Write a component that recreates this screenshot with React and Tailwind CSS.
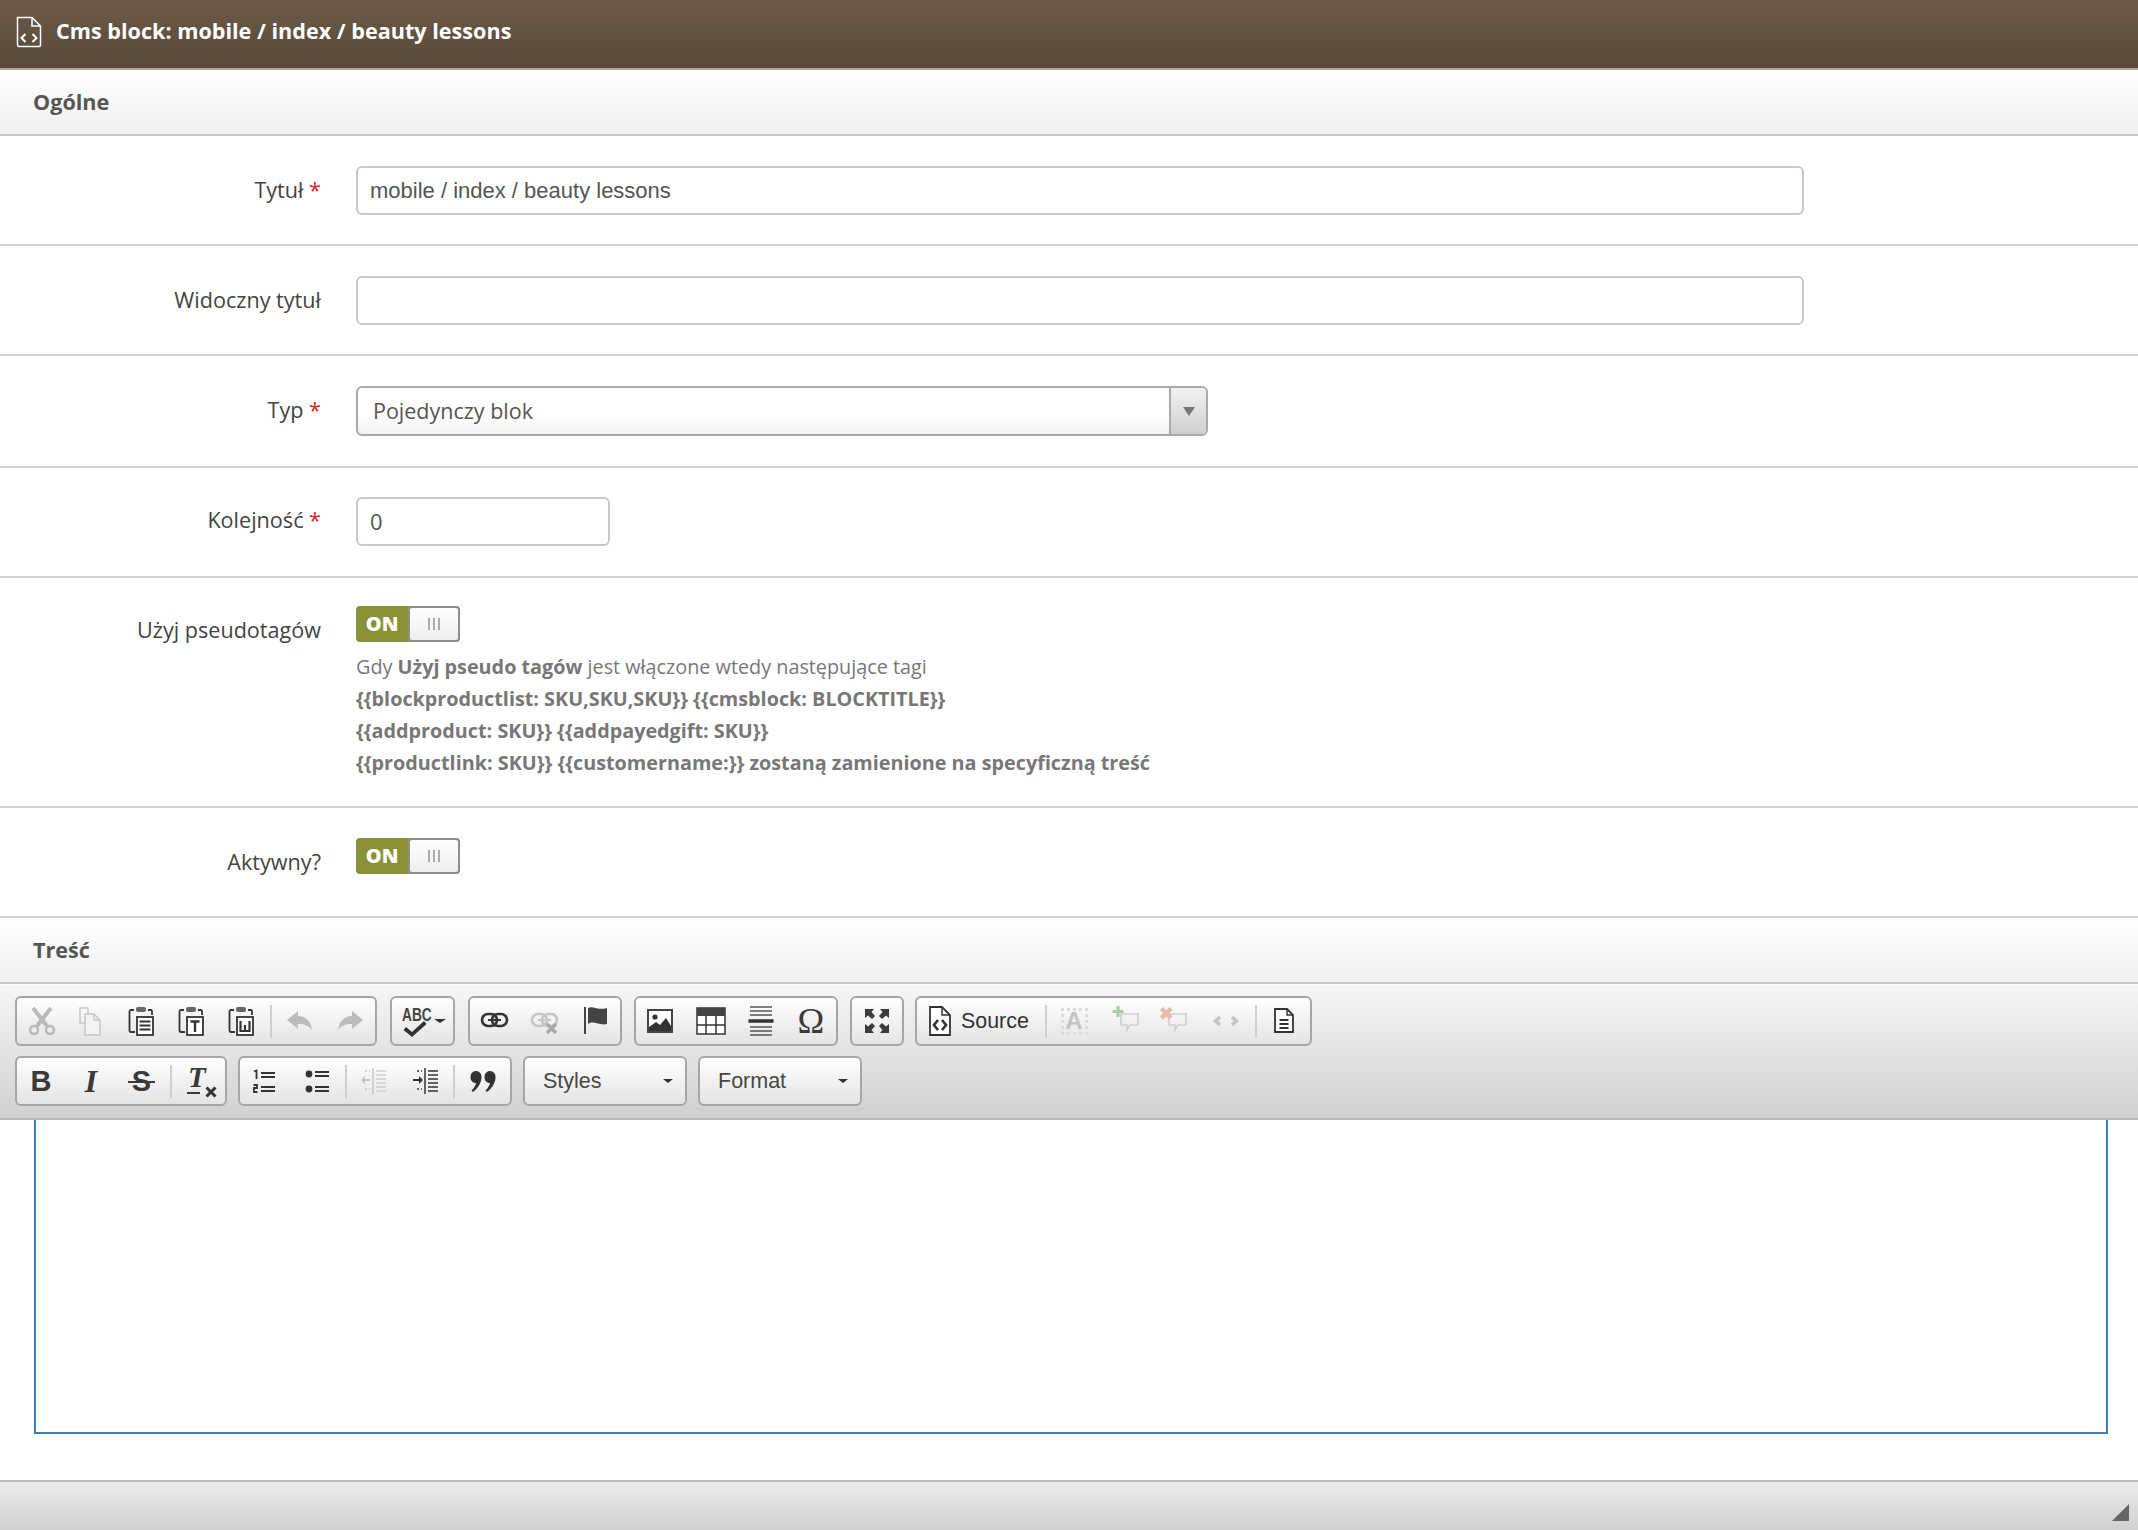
import React from 'react';

const sans = 'font-["Open_Sans",sans-serif]';
const arial = 'font-["Liberation_Sans",Arial,sans-serif]';

const Svg = ({ w = 32, h = 32, children, className = '' }) => (
  <svg width={w} height={h} viewBox={`0 0 ${w} ${h}`} className={className}>
    {children}
  </svg>
);

// toolbar icons, drawn to match the moono skin
const Cut = () => (
  <Svg>
    <g fill="none" stroke="#b9b9b9">
      <path d="M7 3 L21 21 M25 3 L11 21" strokeWidth="4" />
      <circle cx="8" cy="25" r="4" strokeWidth="2.5" />
      <circle cx="24" cy="25" r="4" strokeWidth="2.5" />
    </g>
  </Svg>
);
const Copy = () => (
  <Svg>
    <g fill="#f3f3f3" stroke="#c6c6c6" strokeWidth="1.5">
      <path d="M4 3 H12 V18 H4 Z" fill="none" />
      <path d="M9 9 H18 L24 15 V30 H9 Z" />
      <path d="M18 9 V15 H24" fill="none" />
    </g>
  </Svg>
);
const Clip = ({ children }) => (
  <Svg>
    <path d="M8 5 H5 Q3.5 5 3.5 7 V25 Q3.5 27 5 27 H9 M22 5 H25 Q26 5 26 7 V10" fill="none" stroke="#333" strokeWidth="1.8" />
    <rect x="10" y="2" width="10" height="5" rx="2" fill="#666" />
    <rect x="11" y="12" width="16" height="18" fill="#fff" stroke="#333" strokeWidth="1.8" />
    {children}
  </Svg>
);
const Paste = () => (
  <Clip>
    <path d="M13.5 16.5 H24.5 M13.5 20.5 H24.5 M13.5 24.5 H24.5" stroke="#333" strokeWidth="2" />
  </Clip>
);
const PasteText = () => (
  <Clip>
    <path d="M14.5 16.5 H23.5 M19 16.5 V27" stroke="#333" strokeWidth="2.4" fill="none" />
  </Clip>
);
const PasteWord = () => (
  <Clip>
    <path d="M14.5 16 V26 H23.5 V16 M19 20 V26" stroke="#333" strokeWidth="2.2" fill="none" />
  </Clip>
);
const Undo = ({ flip }) => (
  <Svg className={flip ? '-scale-x-100' : ''}>
    <path d="M3 15 L14 6 V11 C22 11 27 17 28 25 C24 20 20 19 14 19 V24 Z" fill="#bcbcbc" />
  </Svg>
);
const Spell = () => (
  <div className="flex items-center">
    <div className="relative w-[32px] h-[32px]">
      <span className={`${arial} absolute left-[2px] top-[-4px] text-[19px] font-bold text-[#444] scale-x-[0.72] origin-left`}>ABC</span>
      <svg width="32" height="32" viewBox="0 0 32 32" className="absolute inset-0">
        <path d="M6 22 L12 27 L24 16 L26.5 19 L12 32 L3.5 25 Z" fill="#333" />
      </svg>
    </div>
    <div className="w-0 h-0 ml-[2px] border-x-[6px] border-x-transparent border-t-[4px] border-t-[#333]"></div>
  </div>
);
const LinkIcon = ({ color = '#333' }) => (
  <g fill="none" stroke={color} strokeWidth="2.6">
    <rect x="3" y="9" width="15" height="12" rx="6" />
    <rect x="13" y="9" width="15" height="12" rx="6" />
    <path d="M9 15 H22" strokeWidth="2" />
  </g>
);
const Link = () => <Svg><LinkIcon /></Svg>;
const Unlink = () => (
  <Svg>
    <LinkIcon color="#c6c6c6" />
    <path d="M18 19 L27 28 M27 19 L18 28" stroke="#a9a9a9" strokeWidth="3.2" />
  </Svg>
);
const Flag = () => (
  <Svg>
    <path d="M6 2 V29" stroke="#444" strokeWidth="2" />
    <path d="M9 3 C14 0 18 6 28 3 V19 C20 21 15 15 9 19 Z" fill="#444" />
  </Svg>
);
const ImageIcon = () => (
  <Svg>
    <rect x="3" y="5" width="24" height="22" fill="#fff" stroke="#444" strokeWidth="2" />
    <circle cx="10" cy="12" r="2.6" fill="#333" />
    <path d="M4 26 V22 L11 17 L15 20 L21 13 L26 21 V26 Z" fill="#333" />
  </Svg>
);
const TableIcon = () => (
  <Svg>
    <rect x="2" y="3" width="28" height="26" fill="#fff" stroke="#333" strokeWidth="1.5" />
    <rect x="2" y="3" width="28" height="8" fill="#444" />
    <path d="M11 11 V29 M21 11 V29 M2 20 H30" stroke="#333" strokeWidth="1.5" />
  </Svg>
);
const HrIcon = () => (
  <Svg>
    <path d="M5 2 H27 M5 6 H27 M5 10 H27 M5 22 H27 M5 26 H27 M5 30 H27" stroke="#555" strokeWidth="1.6" />
    <path d="M3.5 16 H28.5" stroke="#333" strokeWidth="3.5" />
  </Svg>
);
const FullScreen = () => (
  <Svg>
    <path d="M4 4 H13 L10.5 7 L14 11 L11 14 L7 10.5 L4 13 Z M28 4 H19 L21.5 7 L18 11 L21 14 L25 10.5 L28 13 Z M4 28 H13 L10.5 25 L14 21 L11 18 L7 21.5 L4 19 Z M28 28 H19 L21.5 25 L18 21 L21 18 L25 21.5 L28 19 Z" fill="#3a3a3a" />
  </Svg>
);
const SourceIcon = () => (
  <Svg>
    <path d="M6 2 H18 L26 10 V30 H6 Z" fill="#fff" stroke="#333" strokeWidth="1.8" />
    <path d="M18 2 V10 H26" fill="none" stroke="#333" strokeWidth="1.4" />
    <path d="M14 15 L10 20 L14 25 M18 15 L22 20 L18 25" fill="none" stroke="#333" strokeWidth="2.6" />
  </Svg>
);
const DocIcon = () => (
  <Svg>
    <path d="M7 4 H19 L25 10 V27 H7 Z" fill="#fff" stroke="#333" strokeWidth="1.8" />
    <path d="M19 4 V10 H25" fill="none" stroke="#333" strokeWidth="1.4" />
    <path d="M11.5 15 H20.5 M11.5 19 H20.5 M11.5 23 H20.5" stroke="#333" strokeWidth="2" />
  </Svg>
);
const AnchorA = () => (
  <div className="w-[27px] h-[27px] border-[3px] border-dotted border-[#dcdcdc] flex items-center justify-center">
    <span className={`${arial} text-[24px] leading-none font-bold text-[#c4c4c4]`}>A</span>
  </div>
);
const Comment = ({ add }) => (
  <Svg>
    <path d="M11 9 H28 V20 H20 L17 25 V20 H11 Z" fill="none" stroke="#cfcfcf" strokeWidth="1.6" />
    {add ? (
      <path d="M8 1 V12 M2.5 6.5 H13.5" stroke="#a9cba9" strokeWidth="3.2" />
    ) : (
      <path d="M3.5 3.5 L13 13 M13 3.5 L3.5 13" stroke="#e8b9ac" strokeWidth="4.5" />
    )}
  </Svg>
);
const Tags = () => (
  <Svg>
    <path d="M10 12 L5.5 16 L10 20 M22 12 L26.5 16 L22 20" fill="none" stroke="#c2c2c2" strokeWidth="3.4" />
  </Svg>
);
const Bold = () => <span className={`${arial} mr-[2px] text-[29px] font-bold leading-none text-[#3a3a3a]`}>B</span>;
const Italic = () => <span className="mr-[2px] font-['Liberation_Serif',serif] text-[32px] font-bold italic leading-none text-[#3a3a3a]">I</span>;
const Strike = () => (
  <span className={`${arial} relative mr-[1px] text-[29px] font-bold leading-none text-[#3a3a3a]`}>
    S
    <span className="absolute left-[-4px] right-[-4px] top-[14px] h-[2px] bg-[#3a3a3a]"></span>
  </span>
);
const ClearFormat = () => (
  <span className="relative w-[28px] h-[30px] ml-[2px]">
    <span className="absolute left-[1px] top-[-3px] font-['Liberation_Serif',serif] text-[29px] font-bold italic leading-none text-[#3a3a3a]">T</span>
    <span className="absolute left-0 bottom-[2px] w-[13px] h-[2px] bg-[#3a3a3a]"></span>
    <svg width="12" height="12" viewBox="0 0 12 12" className="absolute right-[-2px] bottom-[-2px]">
      <path d="M1.5 1.5 L10.5 10.5 M10.5 1.5 L1.5 10.5" stroke="#333" strokeWidth="3" />
    </svg>
  </span>
);
const NumList = () => (
  <Svg>
    <path d="M11 8 H25 M11 12 H25 M11 22 H25 M11 26 H25" stroke="#333" strokeWidth="2" />
    <path d="M4 6.5 L6.5 5.5 V14 M3.5 20 H7 V23 H4 V27 H7.5" fill="none" stroke="#333" strokeWidth="1.8" />
  </Svg>
);
const BulList = () => (
  <Svg>
    <circle cx="7" cy="9" r="3.4" fill="#333" />
    <circle cx="7" cy="24" r="3.4" fill="#333" />
    <path d="M13 7 H27 M13 11 H27 M13 22 H27 M13 26 H27" stroke="#333" strokeWidth="2" />
  </Svg>
);
const Outdent = () => (
  <Svg>
    <path d="M15 3 V29" stroke="#c6c6c6" strokeWidth="1.5" />
    <path d="M18 6 H28 M18 10 H28 M18 14 H28 M18 18 H28 M18 22 H28 M18 26 H28" stroke="#cfcfcf" strokeWidth="1.5" />
    <path d="M3 15 L7 11 V14 H12 V16 H7 V19 Z" fill="#c6c6c6" />
    <path d="M7 6 H12 M7 24 H12" stroke="#c6c6c6" strokeWidth="1.5" strokeDasharray="2 2" />
  </Svg>
);
const Indent = () => (
  <Svg>
    <path d="M15 3 V29" stroke="#333" strokeWidth="1.5" />
    <path d="M18 6 H28 M18 10 H28 M18 14 H28 M18 18 H28 M18 22 H28 M18 26 H28" stroke="#333" strokeWidth="1.5" />
    <path d="M13 15 L9 11 V14 H3 V16 H9 V19 Z" fill="#333" />
    <path d="M7 6 H12 M7 24 H12" stroke="#333" strokeWidth="1.5" strokeDasharray="2 2" />
  </Svg>
);
const Quote = () => (
  <Svg>
    <path d="M9 6 C12.5 6 15 9 14.5 13 C14 19 10 24 6 27 L4.5 25.5 C7 23 8.5 20.5 9 18 C5.5 18 3.5 15.5 3.5 12 C3.5 8.5 6 6 9 6 Z" fill="#333" />
    <path d="M23 6 C26.5 6 29 9 28.5 13 C28 19 24 24 20 27 L18.5 25.5 C21 23 22.5 20.5 23 18 C19.5 18 17.5 15.5 17.5 12 C17.5 8.5 20 6 23 6 Z" fill="#333" />
  </Svg>
);

const Btn = ({ w = 'w-[50px]', children }) => (
  <div className={`${w} flex items-center justify-center`}>{children}</div>
);
const Sep = ({ className = 'mx-[3px]' }) => (
  <div className={`w-[2px] h-[33px] my-auto bg-[#cfcfcf] ${className}`}></div>
);
const Group = ({ className = '', children }) => (
  <div className={`flex h-[50px] border-2 border-[#a6a6a6] rounded-[6px] bg-gradient-to-b from-white to-[#e4e4e4] ${className}`}>
    {children}
  </div>
);
const Combo = ({ label, className }) => (
  <Group className={`items-center pl-[18px] pr-[12px] justify-between ${className}`}>
    <span className={`${arial} text-[21.5px] text-[#484848]`}>{label}</span>
    <div className="w-0 h-0 border-x-[5px] border-x-transparent border-t-[4px] border-t-[#333]"></div>
  </Group>
);

const Star = () => <span className="text-[#e02020]"> *</span>;

const Label = ({ children, className = '' }) => (
  <label className={`${sans} w-[321px] shrink-0 mr-[35px] text-right text-[21.6px] leading-[30px] text-[#444] ${className}`}>
    {children}
  </label>
);

const Toggle = () => (
  <div className={`${sans} flex w-[104px] h-[36px] rounded-[4px] overflow-hidden bg-[#8a9035]`}>
    <div className="w-[52px] flex items-center justify-center text-[20px] font-extrabold text-white">ON</div>
    <div className="flex-1 flex items-center justify-center gap-[3px] border-2 border-[#8f8f8f] rounded-[4px] bg-gradient-to-b from-white to-[#eeeeee]">
      <span className="w-[2px] h-[12px] bg-[#aaa]"></span>
      <span className="w-[2px] h-[12px] bg-[#aaa]"></span>
      <span className="w-[2px] h-[12px] bg-[#aaa]"></span>
    </div>
  </div>
);

const SectionBar = ({ children, className = '' }) => (
  <div className={`${sans} h-[66px] pl-[33px] flex items-center text-[21.6px] font-bold text-[#555] bg-gradient-to-b from-white to-[#f0f0f0] border-b-2 border-[#c8c8c8] ${className}`}>
    {children}
  </div>
);

const Input = ({ value, width }) => (
  <div className={`${width} h-[49px] border-2 border-[#c8c8c8] rounded-[6px] pl-[12px] flex items-center text-[22px] text-[#555]`}>
    {value}
  </div>
);

export default function App() {
  return (
    <div className={`${sans} w-[2138px] h-[1530px] bg-white overflow-hidden flex flex-col`}>
      <div className="h-[70px] shrink-0 flex items-center pl-[15px] pb-[5px] bg-gradient-to-b from-[#6c5b47] to-[#57483a] border-b-2 border-[#b0a89c]">
        <svg width="28" height="32" viewBox="0 0 28 32" fill="none" stroke="#fff" strokeWidth="1.5">
          <path d="M2.5 1.5 H17 L25.5 10 V29 Q25.5 30.5 24 30.5 H4 Q2.5 30.5 2.5 29 Z" />
          <path d="M17 1.5 V10 H25.5" />
          <path d="M10.5 18 L6.5 22 L10.5 26 M17.5 18 L21.5 22 L17.5 26" strokeWidth="2" />
        </svg>
        <span className="ml-[13px] text-[21.6px] font-bold text-white">Cms block: mobile / index / beauty lessons</span>
      </div>

      <SectionBar>Ogólne</SectionBar>

      <div className="flex h-[110px] pt-[30px] border-b-2 border-[#d0d0d0]">
        <Label className="pt-[9px]">Tytuł<Star /></Label>
        <Input width="w-[1448px]" value={<span className={arial}>mobile / index / beauty lessons</span>} />
      </div>
      <div className="flex h-[110px] pt-[30px] border-b-2 border-[#d0d0d0]">
        <Label className="pt-[9px]">Widoczny tytuł</Label>
        <Input width="w-[1448px]" value="" />
      </div>
      <div className="flex h-[112px] pt-[30px] border-b-2 border-[#d0d0d0]">
        <Label className="pt-[9px]">Typ<Star /></Label>
        <div className="w-[852px] h-[50px] flex border-2 border-[#a9a9a9] rounded-[6px] overflow-hidden bg-gradient-to-b from-white from-60% to-[#f1f1f1]">
          <div className="flex-1 pl-[15px] flex items-center text-[21.5px] text-[#555]">Pojedynczy blok</div>
          <div className="w-[37px] flex items-center justify-center border-l-2 border-[#a9a9a9] bg-gradient-to-b from-[#f2f2f2] to-[#cfcfcf]">
            <div className="w-0 h-0 border-x-[6px] border-x-transparent border-t-[9px] border-t-[#777]"></div>
          </div>
        </div>
      </div>
      <div className="flex h-[110px] pt-[29px] border-b-2 border-[#d0d0d0]">
        <Label className="pt-[8px]">Kolejność<Star /></Label>
        <Input width="w-[254px]" value="0" />
      </div>
      <div className="flex h-[230px] pt-[28px] border-b-2 border-[#d0d0d0]">
        <Label className="pt-[9px]">Użyj pseudotagów</Label>
        <div>
          <Toggle />
          <div className="mt-[9px] text-[19.8px] leading-[32px] text-[#777]">
            <p>Gdy <b>Użyj pseudo tagów</b> jest włączone wtedy następujące tagi</p>
            <p className="font-bold">{'{{blockproductlist: SKU,SKU,SKU}} {{cmsblock: BLOCKTITLE}}'}</p>
            <p className="font-bold">{'{{addproduct: SKU}} {{addpayedgift: SKU}}'}</p>
            <p className="font-bold">{'{{productlink: SKU}} {{customername:}} zostaną zamienione na specyficzną treść'}</p>
          </div>
        </div>
      </div>
      <div className="flex h-[110px] pt-[30px] border-b-2 border-[#d0d0d0]">
        <Label className="pt-[9px]">Aktywny?</Label>
        <Toggle />
      </div>

      <SectionBar>Treść</SectionBar>

      <div className="h-[136px] shrink-0 pt-[11px] pl-[15px] flex flex-col gap-[10px] bg-gradient-to-b from-[#f6f6f6] to-[#cfd1cf] border-t border-white border-b-2 border-b-[#b6b6b6]">
        <div className="flex">
          <Group className="mr-[13px]">
            <Btn><Cut /></Btn><Btn><Copy /></Btn><Btn><Paste /></Btn><Btn><PasteText /></Btn><Btn><PasteWord /></Btn>
            <Sep />
            <Btn><Undo /></Btn><Btn><Undo flip /></Btn>
          </Group>
          <Group className="mr-[13px] w-[65px] items-center justify-center"><Spell /></Group>
          <Group className="mr-[12px]">
            <Btn><Link /></Btn><Btn><Unlink /></Btn><Btn><Flag /></Btn>
          </Group>
          <Group className="mr-[12px]">
            <Btn><ImageIcon /></Btn><Btn><TableIcon /></Btn><Btn><HrIcon /></Btn>
            <Btn><span className="font-['Liberation_Serif',serif] text-[36px] leading-none text-[#3a3a3a]">Ω</span></Btn>
          </Group>
          <Group className="mr-[11px]"><Btn><FullScreen /></Btn></Group>
          <Group className="w-[397px]">
            <div className="flex items-center pl-[7px] w-[128px]">
              <SourceIcon />
              <span className={`${arial} ml-[5px] text-[21.4px] text-[#333]`}>Source</span>
            </div>
            <Sep className="mx-0" />
            <Btn w="w-[54px]"><AnchorA /></Btn>
            <Btn><Comment add /></Btn>
            <Btn w="w-[46px]"><Comment /></Btn>
            <Btn w="w-[58px]"><Tags /></Btn>
            <Sep className="mx-0" />
            <Btn w="w-[53px]"><DocIcon /></Btn>
          </Group>
        </div>
        <div className="flex">
          <Group className="mr-[11px]">
            <Btn><Bold /></Btn><Btn><Italic /></Btn><Btn><Strike /></Btn>
            <Sep />
            <Btn><ClearFormat /></Btn>
          </Group>
          <Group className="mr-[11px]">
            <Btn w="w-[52px]"><NumList /></Btn><Btn w="w-[52px]"><BulList /></Btn>
            <Sep className="mx-[1px]" />
            <Btn w="w-[52px]"><Outdent /></Btn><Btn w="w-[52px]"><Indent /></Btn>
            <Sep className="mx-[1px]" />
            <Btn w="w-[54px]"><Quote /></Btn>
          </Group>
          <Combo label="Styles" className="w-[164px] mr-[11px]" />
          <Combo label="Format" className="w-[164px]" />
        </div>
      </div>

      <div className="h-[314px] shrink-0 ml-[34px] w-[2074px] border-x-2 border-b-2 border-[#3a7fb8] bg-white"></div>
      <div className="flex-1"></div>
      <div className="h-[50px] shrink-0 relative border-t-2 border-[#bdbdbd] bg-gradient-to-b from-[#ececec] to-[#cfd0cf]">
        <svg width="19" height="19" viewBox="0 0 19 19" className="absolute right-[8px] bottom-[8px]">
          <path d="M18 1 V18 H1 Z" fill="#666" />
        </svg>
      </div>
    </div>
  );
}
